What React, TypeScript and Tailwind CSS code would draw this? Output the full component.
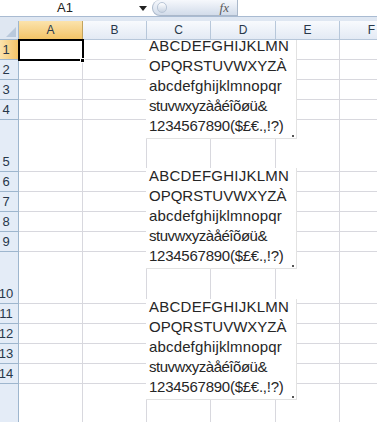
import React from 'react';

const cols = ['A', 'B', 'C', 'D', 'E', 'F'];
const colWidths = ['w-[64px]', 'w-[64px]', 'w-[64px]', 'w-[65px]', 'w-[64px]', 'w-[64px]'];

// row number + height; rows 5 and 10 are tall, numbers sit at the bottom
const rows: { n: string; h: string }[] = [
  { n: '1', h: 'h-[20px]' },
  { n: '2', h: 'h-[20px]' },
  { n: '3', h: 'h-[20px]' },
  { n: '4', h: 'h-[20px]' },
  { n: '5', h: 'h-[52px]' },
  { n: '6', h: 'h-[20px]' },
  { n: '7', h: 'h-[20px]' },
  { n: '8', h: 'h-[20px]' },
  { n: '9', h: 'h-[20px]' },
  { n: '10', h: 'h-[52px]' },
  { n: '11', h: 'h-[20px]' },
  { n: '12', h: 'h-[20px]' },
  { n: '13', h: 'h-[20px]' },
  { n: '14', h: 'h-[20px]' },
  { n: '', h: 'h-[60px]' },
];

const FontSample: React.FC<{ top: string }> = ({ top }) => (
  <div
    className={`absolute left-[146px] ${top} w-[151px] h-[101px] bg-white border-r border-b border-[#e2e2e2] text-[#262626] text-[15px] leading-[20px] pl-[3px] z-0`}
    style={{ fontFamily: '"Liberation Sans", Arial, sans-serif' }}
  >
    <div className="-mt-[2px] flex flex-col whitespace-nowrap">
      <span className="tracking-[0.25px]">ABCDEFGHIJKLMN</span>
      <span>OPQRSTUVWXYZÀ</span>
      <span className="tracking-[0.15px]">abcdefghijklmnopqr</span>
      <span className="tracking-[-0.5px]">stuvwxyzàåéîõøü&amp;</span>
      <span className="tracking-[-0.25px]">1234567890($£€.,!?)</span>
    </div>
    <div className="absolute left-[146px] top-[97px] w-[2px] h-[2px] bg-[#555]" />
  </div>
);

export default function App() {
  return (
    <div
      className="w-[377px] h-[422px] overflow-hidden bg-white relative"
      style={{ fontFamily: '"Liberation Sans", Arial, sans-serif' }}
    >
      {/* formula bar */}
      <div className="flex h-[16px] bg-white">
        <div className="w-[152px] flex items-center pl-[57px] pr-[5px]">
          <span className="text-[13px] leading-[16px] text-[#222]">A1</span>
          <svg className="ml-auto" width="8" height="5" viewBox="0 0 8 5">
            <path d="M0 0 L8 0 L4 5 Z" fill="#222" />
          </svg>
        </div>
        <div className="w-[86px] h-[16px] rounded-l-full border border-[#aab8ca] border-t-0 bg-gradient-to-b from-[#f6f8fc] to-[#d2dcea] flex items-center pl-[4px] pr-[8px]">
          <div className="w-[10px] h-[11px] rounded-full bg-gradient-to-b from-[#ffffff] to-[#c8d3e2] border border-[#b8c5d6]" />
          <span className="ml-auto text-[13px] leading-[14px] italic text-[#5a5a5a]" style={{ fontFamily: '"Liberation Serif", serif' }}>fx</span>
        </div>
        <div className="flex-1 bg-white" />
      </div>
      <div className="h-[5px] bg-[#dfe7f2] border-t border-[#a9bbd2]" />

      {/* sheet */}
      <div className="relative">
        {/* column headers */}
        <div className="flex h-[19px] relative z-10">
          <div className="w-[19px] shrink-0 bg-[#dfe7f2] border-r border-b border-[#9eb6ce] flex items-end justify-end p-[2px]">
            <svg width="10" height="10" viewBox="0 0 10 10">
              <path d="M10 0 L10 10 L0 10 Z" fill="#b9c9dc" />
            </svg>
          </div>
          {cols.map((c, i) => (
            <div
              key={c}
              className={`${colWidths[i]} shrink-0 flex items-center justify-center text-[12px] text-[#27374a] border-r border-b ${
                i === 0
                  ? 'bg-gradient-to-b from-[#fbe3ac] to-[#f3c466] border-[#c2a35e]'
                  : 'bg-gradient-to-b from-[#f8fafd] to-[#e3eaf4] border-[#b7c7da]'
              }`}
            >
              {c}
            </div>
          ))}
        </div>

        {/* rows */}
        {rows.map((r, ri) => (
          <div key={ri} className={`flex ${r.h}`}>
            <div
              className={`w-[19px] shrink-0 flex items-end justify-center pr-[6px] pb-[2px] text-[13px] leading-[15px] text-[#27374a] border-r border-b border-[#9eb6ce] ${
                ri === 0 ? 'bg-gradient-to-r from-[#fbe3ac] to-[#f3c466]' : 'bg-[#e4ecf7]'
              }`}
            >
              {r.n}
            </div>
            {cols.map((c, i) => (
              <div
                key={c}
                className={`${colWidths[i]} shrink-0 border-r border-b border-[#d8d8de] bg-white`}
              />
            ))}
          </div>
        ))}

        {/* selection on A1 */}
        <div className="absolute left-[18px] top-[18px] w-[66px] h-[22px] border-2 border-black z-20" />
        <div className="absolute left-[80px] top-[37px] w-[5px] h-[5px] bg-black border border-white z-20" />

        {/* pasted font sample pictures */}
        <FontSample top="top-[17px]" />
        <FontSample top="top-[147px]" />
        <FontSample top="top-[278px]" />
      </div>
    </div>
  );
}
